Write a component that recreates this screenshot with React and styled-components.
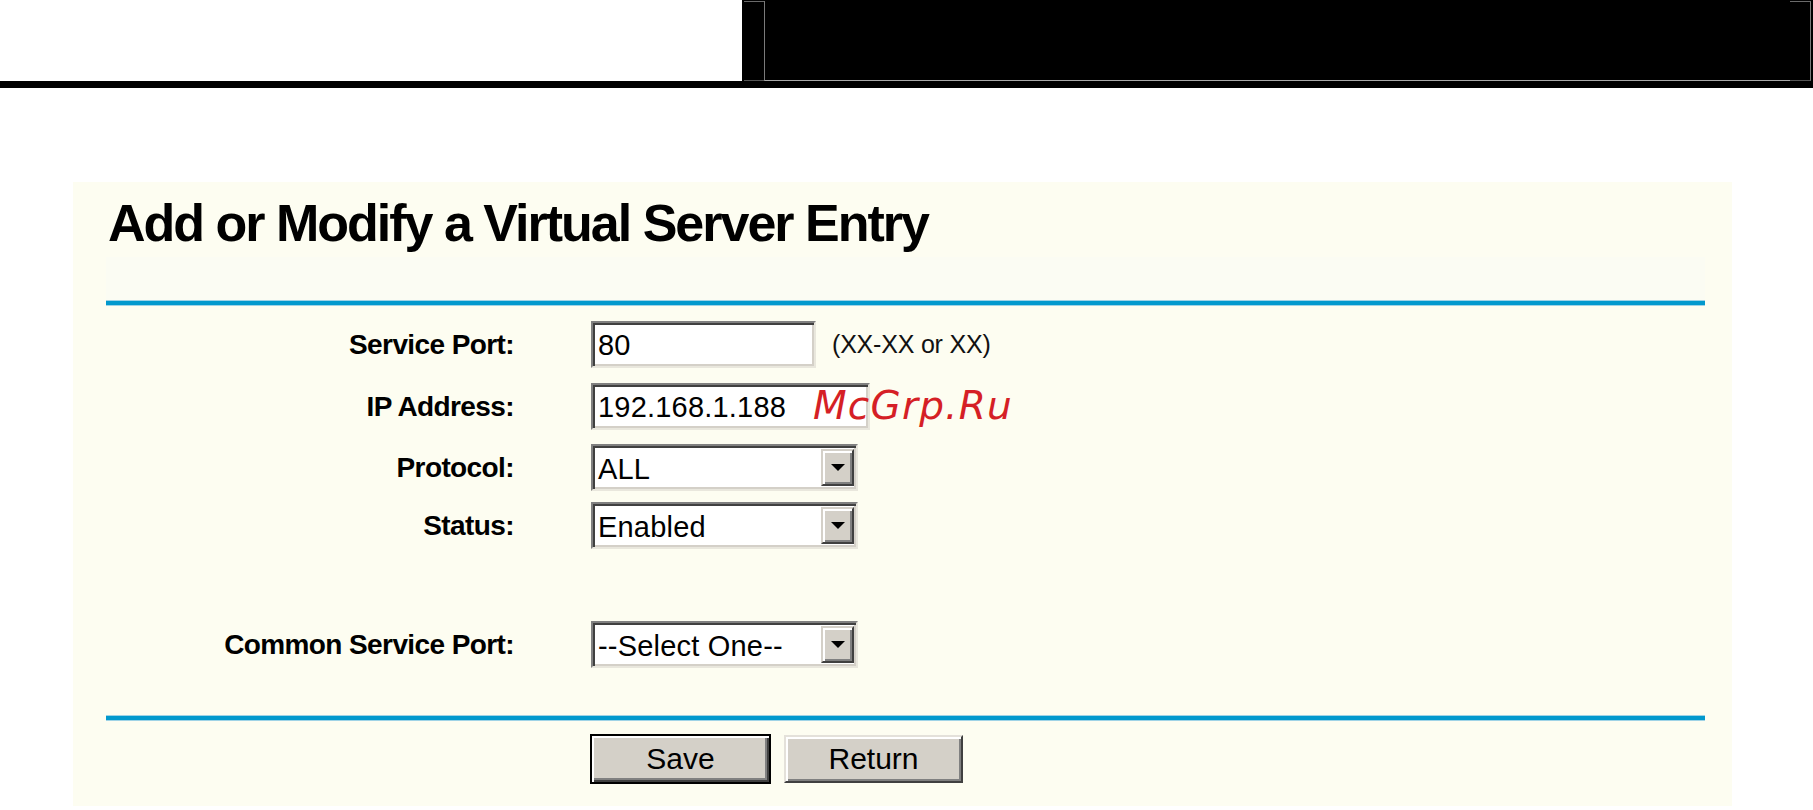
import React from "react";
import styled, { createGlobalStyle } from "styled-components";

const GlobalStyle = createGlobalStyle`
  html, body {
    margin: 0;
    padding: 0;
    background: #ffffff;
    font-family: "Liberation Sans", Arial, sans-serif;
  }
`;

const Header = styled.header`
  display: flex;
  height: 81px;
  border-bottom: 7px solid #000;
`;

const Blank = styled.div`
  width: 742px;
  background: #fff;
`;

const BlackBlock = styled.div`
  flex: 1;
  display: flex;
  background: #000;
  padding: 1px 2px 0 2px;
`;

const Corner = styled.div`
  width: 20px;
  border-top: 1px solid #6a6a6a;
  border-bottom: 1px solid #555;
  border-right: ${({ $right }) => ($right ? "1px solid #7a7a7a" : "none")};
`;

const Frame = styled.div`
  flex: 1;
  border-left: 1px solid #7a7a7a;
  border-bottom: 1px solid #a8a8a8;
`;

const Panel = styled.main`
  width: 1659px;
  margin: 94px 0 0 73px;
  padding: 15px 27px 22px 33px;
  box-sizing: border-box;
  background: #fdfdf1;
`;

const Title = styled.h1`
  margin: 0 0 0 2px;
  font-size: 52px;
  line-height: 52px;
  font-weight: bold;
  letter-spacing: -2px;
  color: #000;
`;

const Band = styled.div`
  height: 44px;
  margin-top: 8px;
  background: #fbfcf3;
`;

const Rule = styled.div`
  height: 4px;
  margin-top: ${({ $top }) => $top || 0}px;
  background: #0299cd;
  box-shadow: 0 1px 0 #9fd3e6, 0 -1px 0 #9fd3e6;
`;

const FieldRow = styled.div`
  display: grid;
  grid-template-columns: 408px 1fr;
  column-gap: 77px;
  align-items: center;
  margin-top: ${({ $top }) => $top}px;
`;

const Label = styled.div`
  text-align: right;
  font-size: 28px;
  font-weight: bold;
  letter-spacing: -0.6px;
  color: #000;
`;

const Control = styled.div`
  position: relative;
  display: flex;
  align-items: center;
  gap: 16px;
`;

const TextBox = styled.div`
  width: ${({ $width }) => $width}px;
  height: 47px;
  box-sizing: border-box;
  display: flex;
  align-items: center;
  padding: 2px 0 0 5px;
  background: #fff;
  border: 2px solid;
  border-color: #808080 #e9e7dd #e9e7dd #808080;
  box-shadow: inset 2px 2px 0 #404040, inset -2px -2px 0 #d4d0c8;
  font-size: 29px;
  letter-spacing: 0.2px;
  color: #000;
`;

const SelectBox = styled(TextBox)`
  justify-content: space-between;
  padding-top: 0;
  padding-right: 2px;

  & > span {
    padding-top: 3px;
  }
`;

const ArrowButton = styled.div`
  width: 33px;
  height: 37px;
  box-sizing: border-box;
  display: flex;
  align-items: center;
  justify-content: center;
  background: #d4d0c8;
  border: 2px solid;
  border-color: #d4d0c8 #404040 #404040 #d4d0c8;
  box-shadow: inset 2px 2px 0 #fff, inset -2px -2px 0 #808080;
`;

const Hint = styled.span`
  font-size: 25px;
  letter-spacing: -0.2px;
  color: #111;
`;

const Watermark = styled.span`
  position: absolute;
  left: 222px;
  top: 3px;
  font-family: "DejaVu Sans", Verdana, sans-serif;
  font-style: italic;
  font-size: 39px;
  line-height: 39px;
  letter-spacing: 1.2px;
  color: #d51f26;
  pointer-events: none;
`;

const ButtonRow = styled.div`
  display: flex;
  align-items: center;
  gap: 13px;
  margin-top: 14px;
  padding-left: 484px;
`;

const Button = styled.button`
  width: ${({ $default }) => ($default ? 181 : 179)}px;
  height: ${({ $default }) => ($default ? 50 : 48)}px;
  box-sizing: border-box;
  padding: 0;
  background: #d4d0c8;
  font-family: "Liberation Sans", Arial, sans-serif;
  font-size: 30px;
  color: #000;
  border: 2px solid;
  border-color: ${({ $default }) =>
    $default ? "#000" : "#e4e1da #404040 #404040 #e4e1da"};
  box-shadow: ${({ $default }) =>
    $default
      ? "inset 2px 2px 0 #fff, inset -2px -2px 0 #404040, inset -4px -4px 0 #808080"
      : "inset 2px 2px 0 #fff, inset -2px -2px 0 #808080"};
`;

const Arrow = () => (
  <svg width="14" height="7" viewBox="0 0 14 7">
    <path d="M0 0 L14 0 L7 7 Z" fill="#000" />
  </svg>
);

const Select = ({ value }) => (
  <SelectBox $width={267}>
    <span>{value}</span>
    <ArrowButton>
      <Arrow />
    </ArrowButton>
  </SelectBox>
);

export default function App() {
  return (
    <>
      <GlobalStyle />
      <Header>
        <Blank />
        <BlackBlock>
          <Corner />
          <Frame />
          <Corner $right />
        </BlackBlock>
      </Header>

      <Panel>
        <Title>Add or Modify a Virtual Server Entry</Title>
        <Band />
        <Rule />

        <FieldRow $top={16}>
          <Label>Service Port:</Label>
          <Control>
            <TextBox $width={225}>80</TextBox>
            <Hint>(XX-XX or XX)</Hint>
          </Control>
        </FieldRow>

        <FieldRow $top={15}>
          <Label>IP Address:</Label>
          <Control>
            <TextBox $width={279}>192.168.1.188</TextBox>
            <Watermark>McGrp.Ru</Watermark>
          </Control>
        </FieldRow>

        <FieldRow $top={14}>
          <Label>Protocol:</Label>
          <Control>
            <Select value="ALL" />
          </Control>
        </FieldRow>

        <FieldRow $top={11}>
          <Label>Status:</Label>
          <Control>
            <Select value="Enabled" />
          </Control>
        </FieldRow>

        <FieldRow $top={72}>
          <Label>Common Service Port:</Label>
          <Control>
            <Select value="--Select One--" />
          </Control>
        </FieldRow>

        <Rule $top={48} />

        <ButtonRow>
          <Button $default>Save</Button>
          <Button>Return</Button>
        </ButtonRow>
      </Panel>
    </>
  );
}
